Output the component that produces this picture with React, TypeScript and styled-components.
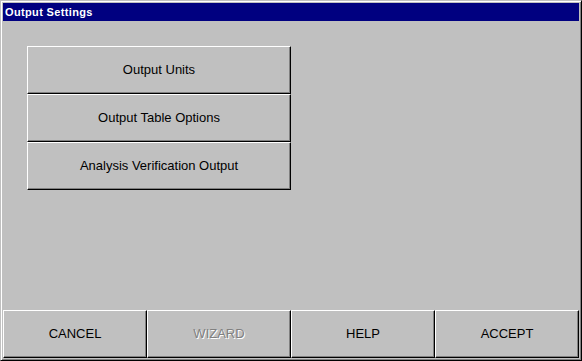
import React from 'react'
import styled, { createGlobalStyle } from 'styled-components'

const GlobalStyle = createGlobalStyle`
  html, body {
    margin: 0;
    padding: 0;
    background: #c0c0c0;
  }
  body {
    font-family: "Liberation Sans", Arial, sans-serif;
  }
`

const optionItems = ['Output Units', 'Output Table Options', 'Analysis Verification Output']

const footerItems = [
  { label: 'CANCEL', disabled: false },
  { label: 'WIZARD', disabled: true },
  { label: 'HELP', disabled: false },
  { label: 'ACCEPT', disabled: false },
]

const App = () => {
  return (
    <>
      <GlobalStyle />
      <Window>
        <TitleBar>Output Settings</TitleBar>
        <Content>
          <OptionList>
            {optionItems.map((item) => (
              <OptionButton key={item}>{item}</OptionButton>
            ))}
          </OptionList>
        </Content>
        <Footer>
          {footerItems.map(({ label, disabled }) => (
            <FooterButton key={label} $disabled={disabled}>{label}</FooterButton>
          ))}
        </Footer>
      </Window>
    </>
  )
}

const Window = styled.div`
  box-sizing: border-box;
  width: 582px;
  height: 361px;
  display: flex;
  flex-direction: column;
  padding: 1px 1px 2px 1px;
  background: #c0c0c0;
  border: 1px solid;
  border-color: #c0c0c0 #000 #000 #c0c0c0;
  box-shadow: inset 1px 1px #fff, inset -1px -1px #808080;
`

const TitleBar = styled.div`
  margin: 1px 1px 0 1px;
  height: 18px;
  line-height: 18px;
  padding-left: 2px;
  background: #000080;
  color: #fff;
  font-weight: bold;
  font-size: 11px;
  letter-spacing: 0.35px;
`

const Content = styled.div`
  flex: 1;
  padding: 25px 0 0 24px;
  margin-left: 1px;
`

const OptionList = styled.div`
  display: flex;
  flex-direction: column;
  width: 264px;
`

const BevelButton = styled.button`
  box-sizing: border-box;
  margin: 0;
  padding: 0 0 2px 0;
  background: #c0c0c0;
  border: 1px solid;
  border-color: #fff #000 #000 #fff;
  box-shadow: inset -1px -1px #808080;
  font-family: "Liberation Sans", Arial, sans-serif;
  font-size: 13px;
  color: #000;
  cursor: default;
`

const OptionButton = styled(BevelButton)`
  height: 48px;
  width: 100%;
`

const Footer = styled.div`
  display: grid;
  grid-template-columns: repeat(4, 144px);
  margin: 0 1px 0 1px;
  height: 48px;
`

const FooterButton = styled(BevelButton)<{ $disabled: boolean }>`
  height: 48px;
  color: ${(p) => (p.$disabled ? '#808080' : '#000')};
  text-shadow: ${(p) => (p.$disabled ? '1px 1px #fff' : 'none')};
`

export default App
